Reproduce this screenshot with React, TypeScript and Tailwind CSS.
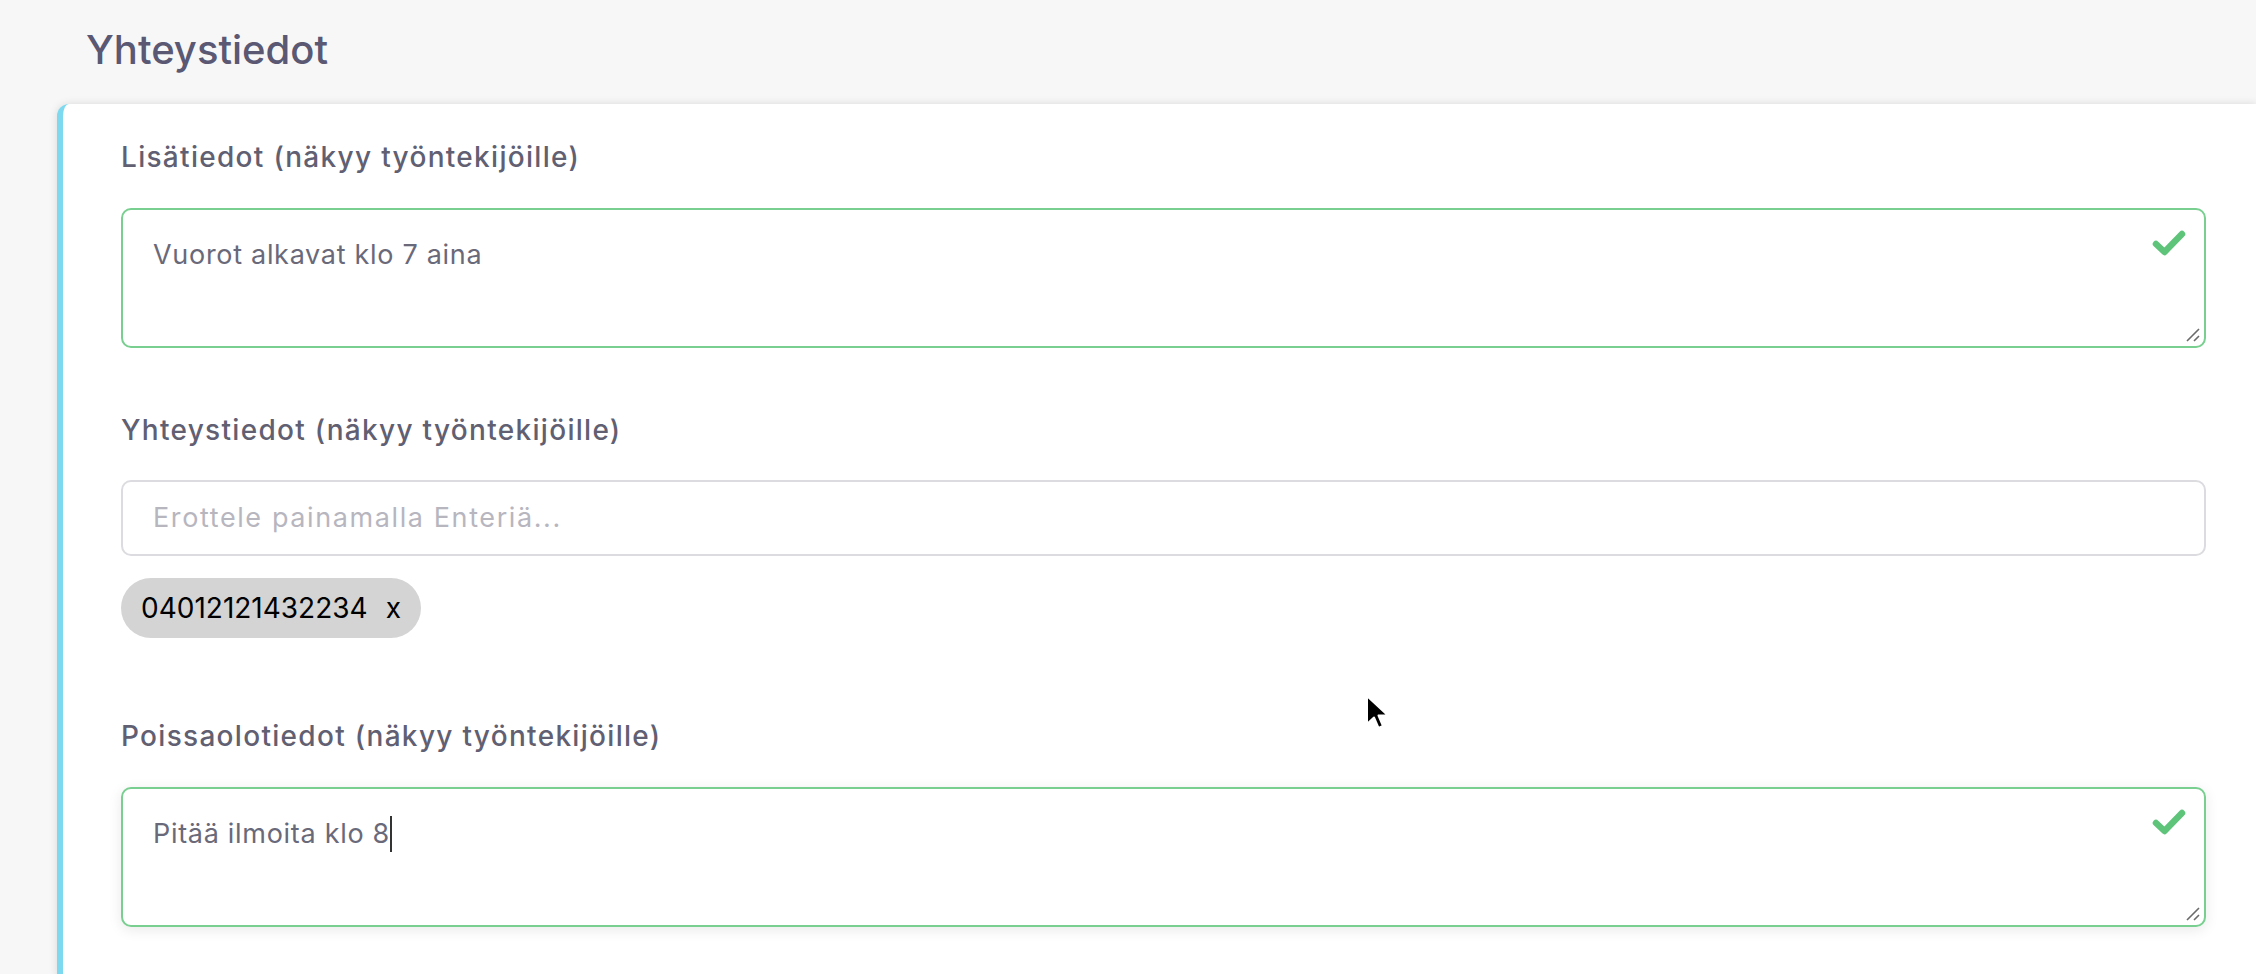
import React from 'react'

const font = { fontFamily: 'Inter, "Noto Sans", sans-serif' }

function Check() {
  return (
    <svg width="34" height="27" viewBox="0 0 34 27" className="absolute right-[18px] top-[20px]">
      <path d="M4 14 L12.5 22 L30 4" fill="none" stroke="#5ec47a" strokeWidth="6.5" strokeLinecap="round" strokeLinejoin="round" />
    </svg>
  )
}

function Grip() {
  return (
    <svg width="16" height="16" viewBox="0 0 16 16" className="absolute right-[3px] bottom-[3px]">
      <path d="M2 14 L14 2 M9 14 L14 9" stroke="#6b6b6b" strokeWidth="1.6" />
    </svg>
  )
}

function Label({ children }: { children: React.ReactNode }) {
  return <p className="text-[28px] leading-[36px] font-medium tracking-[1.3px] text-[#615f72]">{children}</p>
}

function Area({ text, caret, focused }: { text: string; caret?: boolean; focused?: boolean }) {
  return (
    <div
      className={`relative h-[140px] rounded-[10px] border-2 border-[#78cf90] bg-white pl-[30px] pt-[27px] text-[27px] leading-[36px] tracking-[0.7px] text-[#6a6979] ${
        focused ? 'shadow-[0_3px_14px_rgba(0,0,0,0.09)]' : ''
      }`}
    >
      {text}
      {caret && <span className="inline-block w-[2px] h-[36px] bg-[#333] align-middle -mt-[4px]" />}
      <Check />
      <Grip />
    </div>
  )
}

export default function App() {
  return (
    <div className="min-h-screen w-full bg-[#f7f7f8] flex flex-col" style={font}>
      <div className="h-[104px] flex items-center pl-[86px] pb-[4px]">
        <h1 className="text-[40px] font-medium text-[#5a5872]">Yhteystiedot</h1>
      </div>

      <div className="relative flex-1 ml-[57px] bg-white border-l-[6px] border-[#7dd9f0] rounded-tl-[12px] shadow-[0_0_8px_rgba(0,0,0,0.12)] pl-[58px] pr-[50px] pt-[35px] pb-[50px]">
        <Label>Lisätiedot (näkyy työntekijöille)</Label>
        <div className="mt-[33px]">
          <Area text="Vuorot alkavat klo 7 aina" />
        </div>

        <div className="mt-[64px]">
          <Label>Yhteystiedot (näkyy työntekijöille)</Label>
        </div>
        <div className="mt-[32px] h-[76px] rounded-[10px] border-2 border-[#dcdce0] flex items-center pl-[30px]">
          <input
            className="w-full outline-none text-[27px] tracking-[1.6px] text-[#6a6979] placeholder:text-[#b7b6bf] bg-transparent"
            placeholder="Erottele painamalla Enteriä..."
          />
        </div>
        <div className="mt-[22px] flex">
          <span className="h-[60px] rounded-full bg-[#d4d4d4] flex items-center px-[20px] text-[28px] text-black gap-[18px]">
            <span>04012121432234</span>
            <span>x</span>
          </span>
        </div>

        <div className="mt-[80px]">
          <Label>Poissaolotiedot (näkyy työntekijöille)</Label>
        </div>
        <div className="mt-[33px]">
          <Area text="Pitää ilmoita klo 8" caret focused />
        </div>

        <svg width="26" height="38" viewBox="0 0 26 38" className="absolute left-[1302px] top-[590px]">
          <path d="M2 2 L2 30 L9 23.5 L13.5 34 L18 32 L13.5 21.5 L23 21.5 Z" fill="#000" stroke="#fff" strokeWidth="2" strokeLinejoin="round" />
        </svg>
      </div>
    </div>
  )
}
